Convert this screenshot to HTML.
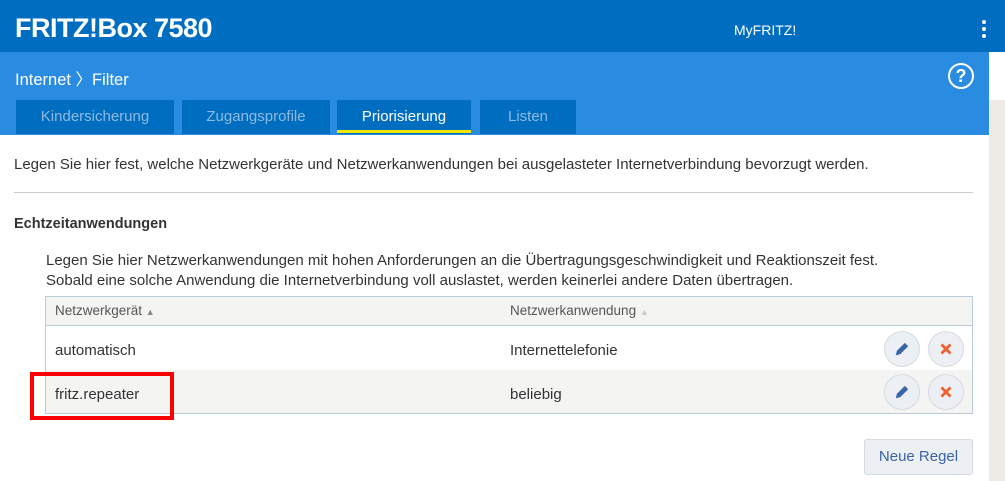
<!DOCTYPE html><html><head><style>
body{margin:0;width:1005px;height:481px;overflow:hidden;background:#fff;font-family:"Liberation Sans",sans-serif;position:relative}
.a{position:absolute}
.top{left:0;top:0;width:1005px;height:52px;background:#006ec0}
.sub{left:0;top:52px;width:989px;height:83px;background:#2a8ce0}
.strip{left:989px;top:100px;width:16px;height:381px;background:#eeebe6}
.tab{top:100px;height:34px;background:#006ec0;color:#8fb8e0;font-size:15px;line-height:34px;text-align:center}
.t{font-size:15px;color:#333}
.btn{width:34px;height:34px;border-radius:50%;background:#eceff3;border:1px solid #d6dbe2;text-align:center;line-height:34px;font-size:15px}
.btn svg{position:absolute;left:8px;top:8px}
</style></head><body>
<div class="a top"></div>
<div class="a" style="left:15px;top:13px;color:#fff;font-size:27px;font-weight:bold;letter-spacing:-0.5px">FRITZ!Box 7580</div>
<div class="a" style="left:734px;top:22px;color:#fff;font-size:14px">MyFRITZ!</div>
<div class="a" style="left:982px;top:20px;width:4px;height:4px;background:#fff;border-radius:50%;box-shadow:0 7px 0 #fff,0 14px 0 #fff"></div>
<div class="a sub"></div>
<div class="a" style="left:15px;top:66px;color:#fff;font-size:16.5px">Internet 〉Filter</div>
<div class="a" style="left:948px;top:63px;width:22px;height:22px;border:2px solid #fff;border-radius:50%;color:#fff;font-weight:bold;font-size:18px;text-align:center;line-height:22px">?</div>
<div class="a strip"></div>
<div class="a tab" style="left:16px;width:158px">Kindersicherung</div>
<div class="a tab" style="left:182px;width:148px">Zugangsprofile</div>
<div class="a tab" style="left:337px;width:134px;color:#fff">Priorisierung<div class="a" style="left:0;bottom:1px;width:134px;height:3px;background:#f5e600"></div></div>
<div class="a tab" style="left:480px;width:96px">Listen</div>
<div class="a t" style="left:14px;top:156px">Legen Sie hier fest, welche Netzwerkgeräte und Netzwerkanwendungen bei ausgelasteter Internetverbindung bevorzugt werden.</div>
<div class="a" style="left:14px;top:192px;width:959px;height:1px;background:#ccc"></div>
<div class="a t" style="left:14px;top:216px;font-weight:bold;font-size:14.5px">Echtzeitanwendungen</div>
<div class="a t" style="left:46px;top:251px;line-height:20px">Legen Sie hier Netzwerkanwendungen mit hohen Anforderungen an die Übertragungsgeschwindigkeit und Reaktionszeit fest.<br>Sobald eine solche Anwendung die Internetverbindung voll auslastet, werden keinerlei andere Daten übertragen.</div>
<div class="a" style="left:45px;top:296px;width:926px;height:116px;border:1px solid #b9cbd8"></div>
<div class="a" style="left:46px;top:297px;width:926px;height:28px;background:#f4f4f3;border-bottom:1px solid #b9cbd8"></div>
<div class="a" style="left:46px;top:370px;width:926px;height:43px;background:#f4f4f3"></div>
<div class="a" style="left:55px;top:303px;font-size:13.5px;color:#555">Netzwerkgerät <span style="font-size:9px;color:#888">▲</span></div>
<div class="a" style="left:510px;top:303px;font-size:13.5px;color:#555">Netzwerkanwendung <span style="font-size:9px;color:#ccc">▲</span></div>
<div class="a t" style="left:55px;top:342px">automatisch</div>
<div class="a t" style="left:510px;top:342px">Internettelefonie</div>
<div class="a t" style="left:55px;top:386px">fritz.repeater</div>
<div class="a t" style="left:510px;top:386px">beliebig</div>
<div class="a" style="left:30px;top:372px;width:136px;height:40px;border:4px solid #f00"></div>
<div class="a btn" style="left:884px;top:331px"><svg width="18" height="18" viewBox="0 0 16 16"><path d="M2.5 13.5 L3.5 9.5 L10.5 2.5 L13.5 5.5 L6.5 12.5 Z" fill="#3a64a8"/></svg></div>
<div class="a btn" style="left:928px;top:331px"><svg width="18" height="18" viewBox="0 0 16 16"><path d="M4 4 L12 12 M12 4 L4 12" stroke="#f06030" stroke-width="2.5"/></svg></div>
<div class="a btn" style="left:884px;top:374px"><svg width="18" height="18" viewBox="0 0 16 16"><path d="M2.5 13.5 L3.5 9.5 L10.5 2.5 L13.5 5.5 L6.5 12.5 Z" fill="#3a64a8"/></svg></div>
<div class="a btn" style="left:928px;top:374px"><svg width="18" height="18" viewBox="0 0 16 16"><path d="M4 4 L12 12 M12 4 L4 12" stroke="#f06030" stroke-width="2.5"/></svg></div>
<div class="a" style="left:864px;top:439px;width:107px;height:34px;background:#eceff3;border:1px solid #d6dbe2;border-radius:3px;color:#3a64a8;font-size:15px;text-align:center;line-height:34px">Neue Regel</div>
</body></html>
